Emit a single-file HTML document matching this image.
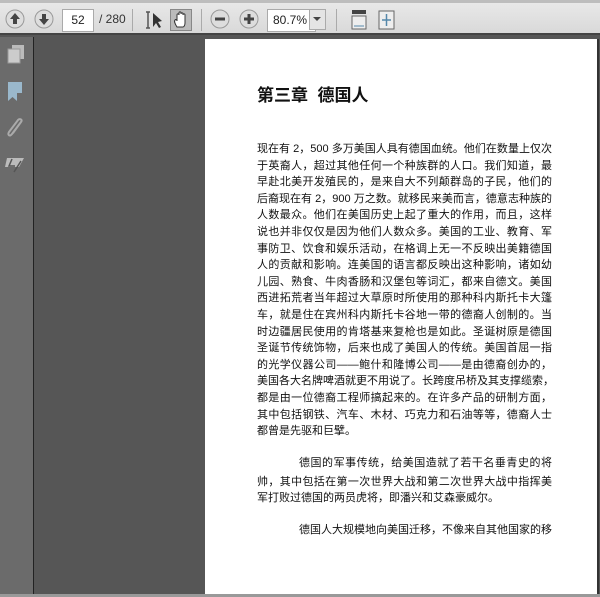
<!DOCTYPE html>
<html><head><meta charset="utf-8"><style>
body{margin:0;width:600px;height:597px;overflow:hidden;background:#565656;font-family:"Liberation Sans","Noto Sans CJK SC",sans-serif;position:relative}
#tb{position:absolute;left:0;top:0;width:600px;height:35px;background:linear-gradient(#e8e8e8,#d9d9d9);border-top:3px solid #bdbdbd;box-sizing:border-box;border-bottom:2px solid #444}
.ic{position:absolute}
#side{position:absolute;left:0;top:37px;width:33px;height:560px;background:#6b6b6b;border-right:1px solid #222}
#page{position:absolute;left:205px;top:39px;width:392px;height:555px;background:#fff;border-right:2px solid #333}
.t{position:absolute;left:52px;font-size:17px;font-weight:bold;color:#111;top:42px}
.l{position:absolute;left:52px;width:295px;font-size:11px;color:#111;text-align:justify;text-align-last:justify;white-space:nowrap;line-height:18px;height:18px}
.l.e{text-align-last:left}
#bot{position:absolute;left:0;top:594px;width:600px;height:3px;background:#999}
</style></head><body>
<div id="tb">
<svg class="ic" style="left:5px;top:6px" width="20" height="20"><circle cx="10" cy="10" r="9" fill="#ddd" stroke="#999"/><path d="M10 4 L15 10 H12 V15 H8 V10 H5Z" fill="#444"/></svg>
<svg class="ic" style="left:34px;top:6px" width="20" height="20"><circle cx="10" cy="10" r="9" fill="#ddd" stroke="#999"/><path d="M10 16 L15 10 H12 V5 H8 V10 H5Z" fill="#444"/></svg>
<div class="ic" style="left:62px;top:6px;width:30px;height:21px;background:#fff;border:1px solid #aaa;font-size:12px;line-height:21px;text-align:center;color:#222">52</div>
<div class="ic" style="left:99px;top:9px;font-size:12px;color:#333">/ 280</div>
<div class="ic" style="left:132px;top:6px;width:1px;height:22px;background:#aaa"></div>
<svg class="ic" style="left:144px;top:6px" width="20" height="22"><path d="M2 3H6M4 3V19M2 19H6" stroke="#555" stroke-width="1.5" fill="none"/><path d="M9 4L9 18L12 14L15 19L17 18L14 13L18 12Z" fill="#333"/></svg>
<div class="ic" style="left:170px;top:6px;width:22px;height:22px;background:#bbb;border:1px solid #888;box-sizing:border-box"></div>
<svg class="ic" style="left:172px;top:7px" width="18" height="20"><path d="M5 17C3 14 2 11 3 10C4 9 5 10 5 11V5C5 3.5 7 3.5 7 5V3C7 1.5 9 1.5 9 3V4C9 2.5 11 2.5 11 4V5C11 3.5 13 3.5 13 5V13C13 15 12 17 11 17Z" fill="#fff" stroke="#333"/></svg>
<div class="ic" style="left:201px;top:6px;width:1px;height:22px;background:#aaa"></div>
<svg class="ic" style="left:210px;top:6px" width="20" height="20"><circle cx="10" cy="10" r="9" fill="#ddd" stroke="#999"/><rect x="5" y="8.5" width="10" height="3" fill="#444"/></svg>
<svg class="ic" style="left:239px;top:6px" width="20" height="20"><circle cx="10" cy="10" r="9" fill="#ddd" stroke="#999"/><path d="M5 8.5H8.5V5H11.5V8.5H15V11.5H11.5V15H8.5V11.5H5Z" fill="#444"/></svg>
<div class="ic" style="left:267px;top:6px;width:42px;height:21px;background:#fff;border:1px solid #aaa;font-size:12px;line-height:21px;padding-left:5px;color:#222">80.7%</div>
<div class="ic" style="left:309px;top:6px;width:17px;height:21px;background:#e4e4e4;border:1px solid #aaa;box-sizing:border-box"></div>
<svg class="ic" style="left:313px;top:14px" width="9" height="5"><path d="M0 0H8L4 4Z" fill="#444"/></svg>
<div class="ic" style="left:336px;top:6px;width:1px;height:22px;background:#aaa"></div>
<svg class="ic" style="left:350px;top:6px" width="18" height="22"><rect x="2" y="1" width="14" height="4" fill="#444"/><rect x="2" y="7" width="14" height="13" fill="#eee" stroke="#666"/><path d="M4 17H14" stroke="#58a"/></svg>
<svg class="ic" style="left:377px;top:6px" width="20" height="22"><rect x="2" y="2" width="15" height="18" fill="#eee" stroke="#666"/><path d="M9.5 5V17M5 11H14" stroke="#58a" stroke-width="1.5"/></svg>
</div>
<div id="side">
<svg class="ic" style="left:5px;top:6px" width="22" height="22"><rect x="7" y="2" width="12" height="14" fill="#bbb"/><rect x="3" y="6" width="12" height="14" fill="#ccc" stroke="#999"/></svg>
<svg class="ic" style="left:7px;top:44px" width="16" height="22"><path d="M1 1H15V12H10V20L5.5 16L1 20Z" fill="#9ab8cc"/></svg>
<svg class="ic" style="left:5px;top:80px" width="22" height="24"><path d="M16 5L7 17C5 20 2 18 4 15L13 3C15 1 18 3 16 5L8 16" stroke="#aaa" stroke-width="2" fill="none"/></svg>
<svg class="ic" style="left:4px;top:118px" width="24" height="20"><path d="M3 3H20L15 12H1Z" fill="#bbb"/><path d="M8 4L5 11H11M17 6L10 17" stroke="#555" stroke-width="1.5" fill="none"/></svg>
</div>
<div id="page">
<div class="t">第三章&nbsp; 德国人</div>
<div class="l" style="top:101px">现在有 2，500 多万美国人具有德国血统。他们在数量上仅次</div>
<div class="l" style="top:118px">于英裔人，超过其他任何一个种族群的人口。我们知道，最</div>
<div class="l" style="top:134px">早赴北美开发殖民的，是来自大不列颠群岛的子民，他们的</div>
<div class="l" style="top:151px">后裔现在有 2，900 万之数。就移民来美而言，德意志种族的</div>
<div class="l" style="top:167px">人数最众。他们在美国历史上起了重大的作用，而且，这样</div>
<div class="l" style="top:184px">说也并非仅仅是因为他们人数众多。美国的工业、教育、军</div>
<div class="l" style="top:201px">事防卫、饮食和娱乐活动，在格调上无一不反映出美籍德国</div>
<div class="l" style="top:217px">人的贡献和影响。连美国的语言都反映出这种影响，诸如幼</div>
<div class="l" style="top:234px">儿园、熟食、牛肉香肠和汉堡包等词汇，都来自德文。美国</div>
<div class="l" style="top:250px">西进拓荒者当年超过大草原时所使用的那种科内斯托卡大篷</div>
<div class="l" style="top:267px">车，就是住在宾州科内斯托卡谷地一带的德裔人创制的。当</div>
<div class="l" style="top:284px">时边疆居民使用的肯塔基来复枪也是如此。圣诞树原是德国</div>
<div class="l" style="top:300px">圣诞节传统饰物，后来也成了美国人的传统。美国首屈一指</div>
<div class="l" style="top:317px">的光学仪器公司——鲍什和隆博公司——是由德裔创办的，</div>
<div class="l" style="top:333px">美国各大名牌啤酒就更不用说了。长跨度吊桥及其支撑缆索，</div>
<div class="l" style="top:350px">都是由一位德裔工程师搞起来的。在许多产品的研制方面，</div>
<div class="l" style="top:367px">其中包括钢铁、汽车、木材、巧克力和石油等等，德裔人士</div>
<div class="l e" style="top:383px">都曾是先驱和巨擘。</div>
<div class="l" style="top:415px;left:94px;width:253px">德国的军事传统，给美国造就了若干名垂青史的将</div>
<div class="l" style="top:434px">帅，其中包括在第一次世界大战和第二次世界大战中指挥美</div>
<div class="l e" style="top:450px">军打败过德国的两员虎将，即潘兴和艾森豪威尔。</div>
<div class="l" style="top:482px;left:94px;width:253px">德国人大规模地向美国迁移，不像来自其他国家的移</div>
</div>
<div id="bot"></div>
</body></html>
